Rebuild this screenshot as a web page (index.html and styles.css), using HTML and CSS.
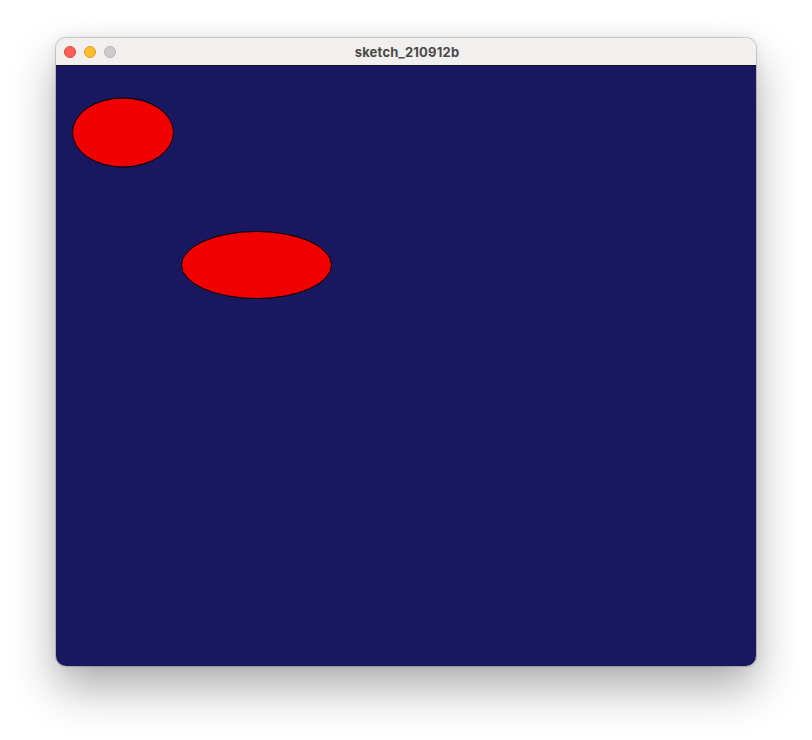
FILE: index.html
```html
<!DOCTYPE html>
<html>
<head>
<meta charset="utf-8">
<link rel="stylesheet" href="styles.css">
</head>
<body>
<div class="window">
  <div class="titlebar">
    <div class="lights">
      <span class="light red"></span>
      <span class="light yellow"></span>
      <span class="light gray"></span>
    </div>
    <div class="title">sketch_210912b</div>
  </div>
  <svg class="canvas" width="700" height="600" viewBox="0 0 700 600">
    <rect width="700" height="600" fill="#181760"/>
    <ellipse cx="67" cy="66.5" rx="50.5" ry="34.5" fill="#f00000" stroke="#000" stroke-width="1"/>
    <ellipse cx="200.5" cy="199" rx="75" ry="33.5" fill="#f00000" stroke="#000" stroke-width="1"/>
  </svg>
</div>
</body>
</html>
```
FILE: styles.css
```css
html, body {
  margin: 0;
  padding: 0;
  background: #ffffff;
}
body {
  padding: 38px 0 0 56px;
  height: 740px;
  box-sizing: border-box;
  overflow: hidden;
}
.window {
  width: 700px;
  border-radius: 10px;
  overflow: hidden;
  box-shadow: 0 0 0 1px rgba(0,0,0,0.16), 0 22px 45px rgba(0,0,0,0.32), 0 0 12px rgba(0,0,0,0.08);
}
.titlebar {
  position: relative;
  height: 28px;
  background: #f2efef;
  display: flex;
  align-items: center;
  justify-content: center;
  border-bottom: 1px solid #0d0d2a;
  box-sizing: border-box;
}
.lights {
  position: absolute;
  left: 8px;
  top: 8px;
  display: flex;
  gap: 8px;
}
.light {
  width: 12px;
  height: 12px;
  border-radius: 50%;
  box-sizing: border-box;
}
.red { background: #fe5f57; border: 0.5px solid #e0443e; }
.yellow { background: #febc2e; border: 0.5px solid #dea123; }
.gray { background: #cdcbcb; border: 0.5px solid #b5b3b3; }
.title {
  font-family: Inter, "Open Sans", sans-serif;
  font-weight: 700;
  font-size: 13px;
  color: #4a4a4a;
  letter-spacing: 0.2px;
  margin-left: 2px;
}
.canvas {
  display: block;
}
```
